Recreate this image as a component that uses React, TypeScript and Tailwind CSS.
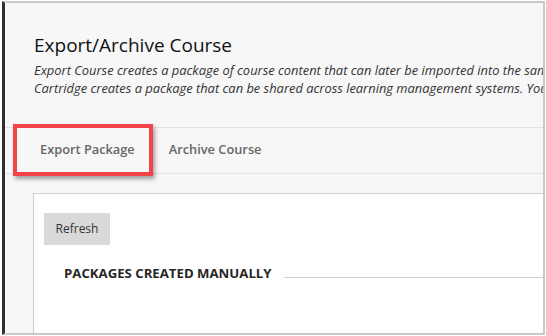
export default function App() {
  return (
    <div className="w-[546px] h-[336px] bg-white overflow-hidden relative font-['Open_Sans',sans-serif]">
      <div className="ml-[2px] mt-[1px] w-[543px] h-[334px] border-t-2 border-b-2 border-r-2 border-[#c9c9c9] border-l-[3px] border-l-[#2f2f2f] bg-[#f7f7f7] overflow-hidden">
        <div className="pl-[29px] pt-[28px]">
          <h1 className="text-[19px] leading-[28px] text-[#111] whitespace-nowrap">
            Export/Archive Course
          </h1>
          <p className="mt-[2px] text-[12.9px] leading-[18px] italic text-[#333] whitespace-nowrap">
            Export Course creates a package of course content that can later be imported into the same or another course. Common
            <br />
            Cartridge creates a package that can be shared across learning management systems. You can also archive a course.
          </p>
        </div>

        <div className="mt-[30px] h-[47px] border-t border-b border-[#e3e3e3] flex items-center gap-[34px] pl-[35px] pb-[1px]">
          <span className="text-[12.8px] font-semibold text-[#666]">Export Package</span>
          <span className="text-[12.8px] font-semibold text-[#666]">Archive Course</span>
        </div>

        <div className="mt-[19px] ml-[28px] bg-white border-t border-l border-[#cfcfcf] h-[200px] pl-[10px] pt-[19px]">
          <button className="w-[66px] h-[32px] bg-[#d9d9d9] text-[12px] text-[#333] rounded-[1px]">
            Refresh
          </button>
          <div className="mt-[19px] pl-[20px] flex items-center gap-[12px]">
            <h2 className="text-[13.2px] font-bold text-[#262626] whitespace-nowrap">PACKAGES CREATED MANUALLY</h2>
            <div className="flex-1 h-px bg-[#cfcfcf] mt-[8px]" />
          </div>
          <p className="mt-[45px] pl-[30px] text-[13px] text-[#555]">No packages have been created.</p>
        </div>
      </div>

      <div className="absolute left-[13px] top-[124px] w-[140px] h-[52px] border-[4px] border-[#f2434a] shadow-[2px_3px_4px_rgba(0,0,0,0.35)]" />
    </div>
  );
}
